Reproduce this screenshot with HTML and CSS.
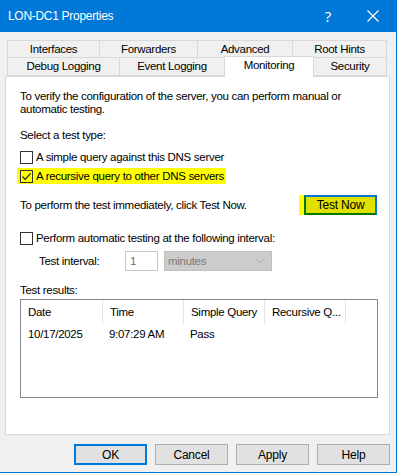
FILE: index.html
```html
<!DOCTYPE html>
<html>
<head>
<meta charset="utf-8">
<link rel="stylesheet" href="styles.css">
</head>
<body>
<div class="window">
  <div class="titlebar">
    <span class="title">LON-DC1 Properties</span>
    <span class="help-q">?</span>
    <svg class="close-x" width="12" height="12" viewBox="0 0 12 12"><path d="M0.5 0.5 L11.5 11.5 M11.5 0.5 L0.5 11.5" stroke="#fff" stroke-width="1.2" fill="none"/></svg>
  </div>
  <div class="tabs">
    <div class="tabrow">
      <div class="tab w-if">Interfaces</div>
      <div class="tab w-fw">Forwarders</div>
      <div class="tab w-adv">Advanced</div>
      <div class="tab w-rh">Root Hints</div>
    </div>
    <div class="tabrow">
      <div class="tab w-dl">Debug Logging</div>
      <div class="tab w-el">Event Logging</div>
      <div class="tab w-mon active">Monitoring</div>
      <div class="tab w-sec">Security</div>
    </div>
  </div>
  <div class="panel">
    <p class="intro">To verify the configuration of the server, you can perform manual or automatic testing.</p>
    <div class="label sel-label">Select a test type:</div>
    <div class="check row1"><span class="box"></span><span>A simple query against this DNS server</span></div>
    <div class="check row2"><span class="hl"><span class="box"><svg width="11" height="11" viewBox="0 0 11 11"><path d="M1.5 5.5 L4.2 8.3 L9.6 2.4" stroke="#222" stroke-width="1.2" fill="none"/></svg></span><span>A recursive query to other DNS servers</span></span></div>
    <div class="testnow-row"><span>To perform the test immediately, click Test Now.</span><button class="btn-testnow">Test Now</button></div>
    <div class="check row3"><span class="box"></span><span>Perform automatic testing at the following interval:</span></div>
    <div class="interval-row">
      <span class="interval-label">Test interval:</span>
      <span class="num-input">1</span>
      <span class="select">minutes<svg width="10" height="6" viewBox="0 0 10 6"><path d="M0.5 0.5 L5 5 L9.5 0.5" stroke="#a8a8a8" stroke-width="1" fill="none"/></svg></span>
    </div>
    <div class="label res-label">Test results:</div>
    <div class="list">
      <div class="list-head">
        <span class="col c1">Date</span>
        <span class="col c2">Time</span>
        <span class="col c3">Simple Query</span>
        <span class="col c4">Recursive Q...</span>
      </div>
      <div class="list-row">
        <span class="col c1">10/17/2025</span>
        <span class="col c2">9:07:29 AM</span>
        <span class="col c3">Pass</span>
        <span class="col c4"></span>
      </div>
    </div>
  </div>
  <div class="buttons">
    <button class="btn default">OK</button>
    <button class="btn">Cancel</button>
    <button class="btn">Apply</button>
    <button class="btn">Help</button>
  </div>
</div>
</body>
</html>
```
FILE: styles.css
```css
* { box-sizing: border-box; }
html, body { margin: 0; padding: 0; background: #ffffff; }
body {
  font-family: "Liberation Sans", Arial, sans-serif;
  font-size: 11.5px;
  letter-spacing: -0.3px;
  color: #000;
}
.window {
  width: 397px;
  height: 473px;
  background: #f0f0f0;
  border-right: 1px solid #0078d7;
  border-bottom: 1px solid #0078d7;
  display: flex;
  flex-direction: column;
}
.titlebar {
  height: 32px;
  background: #0078d7;
  color: #fff;
  display: flex;
  align-items: center;
  padding-left: 8px;
  flex-shrink: 0;
}
.title {
  font-size: 12px;
  letter-spacing: -0.3px;
  flex: 1;
}
.help-q {
  font-family: "Open Sans", sans-serif;
  font-size: 15px;
  margin-right: 36px;
}
.close-x { margin-right: 17px; }

.tabs {
  margin-top: 8px;
  margin-left: 7px;
  width: 380px;
}
.tabrow { display: flex; height: 18px; }
.tab {
  height: 18px;
  border: 1px solid #d9d9d9;
  border-right: none;
  background: #f0f0f0;
  display: flex;
  align-items: center;
  justify-content: center;
  line-height: 1;
  padding-top: 1px;
}
.tabrow .tab:last-child { border-right: 1px solid #d9d9d9; }
.tabrow + .tabrow .tab { border-top: none; }
.w-if { width: 92px; }
.w-fw { width: 98px; }
.w-adv { width: 95px; }
.w-rh { width: 95px; }
.w-dl { width: 112px; }
.w-el { width: 105px; }
.w-mon { width: 90px; }
.w-sec { width: 73px; }
.tab.active {
  background: #fff;
  height: 21px;
  margin-top: -2px;
  border-top: 1px solid #d9d9d9 !important;
  border-right: 1px solid #d9d9d9;
  border-bottom: none;
  position: relative;
  z-index: 2;
  align-items: flex-start;
  padding-top: 3px;
}
.tab.active + .tab { border-left: none; }

.panel {
  margin-left: 5px;
  width: 385px;
  height: 359px;
  background: #fff;
  border: 1px solid #d9d9d9;
  padding-left: 14px;
  display: flex;
  flex-direction: column;
  flex-shrink: 0;
}
.intro {
  margin: 13px 0 0 0;
  line-height: 13px;
  width: 330px;
}
.label { line-height: 13px; }
.sel-label { margin-top: 13px; }
.check {
  display: flex;
  align-items: center;
  height: 16px;
}
.check .box, .hl .box {
  width: 13px;
  height: 13px;
  border: 1px solid #333;
  margin-right: 3px;
  display: flex;
  align-items: center;
  justify-content: center;
  flex-shrink: 0;
}
.row1 { margin-top: 7px; }
.row2 { margin-top: 3px; }
.hl {
  background: #ffff00;
  display: flex;
  align-items: center;
  height: 16px;
  margin-left: -3px;
  padding-left: 3px;
  padding-right: 2px;
}
.testnow-row {
  margin-top: 11px;
  height: 20px;
  display: flex;
  align-items: center;
  justify-content: space-between;
  padding-right: 12px;
}
.btn-testnow {
  width: 73px;
  height: 20px;
  background: #e1e100;
  border: 2px solid #0078d7;
  border-left-color: #007800;
  border-bottom-color: #007800;
  font-family: inherit;
  font-size: 12px;
  letter-spacing: -0.2px;
  color: #000;
  padding: 0;
  box-shadow: -5px 0 0 #ffff00;
}
.row3 { margin-top: 15px; }
.interval-row {
  margin-top: 5px;
  height: 20px;
  display: flex;
  align-items: center;
  padding-left: 19px;
}
.interval-label { width: 86px; }
.num-input {
  width: 33px;
  height: 20px;
  border: 1px solid #c8c8c8;
  color: #6d6d6d;
  padding: 1px 0 0 4px;
  line-height: 16px;
  margin-right: 6px;
}
.select {
  width: 108px;
  height: 20px;
  background: #cccccc;
  border: 1px solid #bfbfbf;
  color: #7a7a7a;
  display: flex;
  align-items: center;
  justify-content: space-between;
  padding: 0 6px 0 3px;
}
.res-label { margin-top: 13px; }
.list {
  margin-top: 2px;
  width: 358px;
  height: 99px;
  border: 1px solid #828790;
}
.list-head, .list-row { display: flex; }
.list-head { height: 24px; align-items: center; }
.list-row { height: 20px; align-items: center; }
.col {
  padding-left: 7px;
  white-space: nowrap;
}
.list-head .col {
  border-right: 1px solid #e5e5e5;
  height: 24px;
  display: flex;
  align-items: center;
}
.c1 { width: 81px; }
.c2 { width: 81px; }
.c3 { width: 81px; }
.c4 { width: 81px; }
.list-head .c1 { width: 82px; }

.buttons {
  margin-top: 9px;
  display: flex;
  justify-content: flex-end;
  gap: 8px;
  padding-right: 6px;
}
.btn {
  width: 73px;
  height: 21px;
  background: #e1e1e1;
  border: 1px solid #adadad;
  font-family: inherit;
  font-size: 12px;
  letter-spacing: -0.2px;
  color: #000;
  padding: 0;
}
.btn.default { border: 2px solid #0078d7; }
```
